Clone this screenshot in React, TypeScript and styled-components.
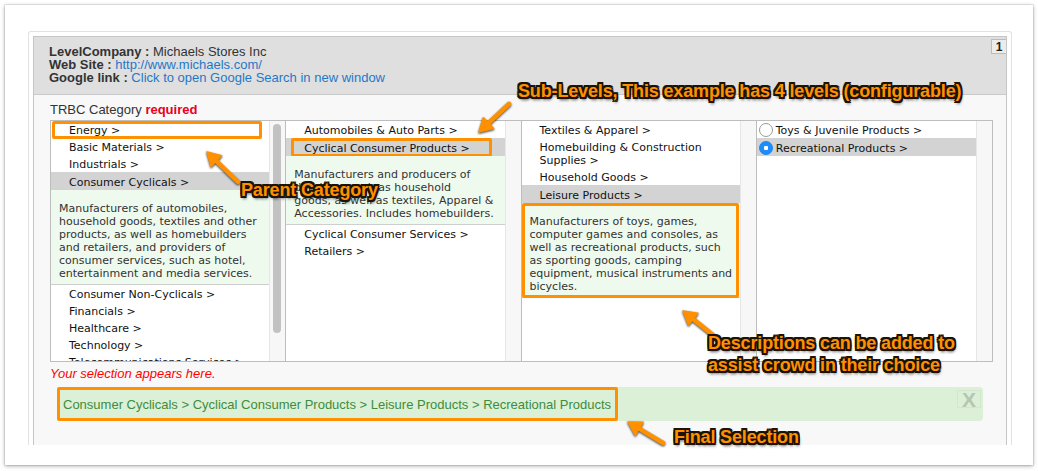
import React from 'react'
import styled, { createGlobalStyle } from 'styled-components'

/*
  TRBC category picker with screenshot annotations.
*/

const GlobalStyle = createGlobalStyle`
  html, body {
    margin: 0;
    padding: 0;
    background: #fff;
  }
  body {
    font-family: "Liberation Sans", Arial, Helvetica, sans-serif;
  }
`

const ORANGE = '#ff9000'

type Item = { label: string; selected?: boolean; mark?: [number, number, number, number] }

const Stage = styled.div`
  position: relative;
  width: 1038px;
  height: 471px;
  padding: 5px;
  box-sizing: border-box;
  overflow: hidden;
`

const Card = styled.div`
  height: 460px;
  background: #fff;
  box-shadow: 0 0 0 1px rgba(0, 0, 0, 0.07), 0 1px 4px rgba(0, 0, 0, 0.35);
  padding: 26px 21px 0 23px;
  box-sizing: border-box;
`

const Frame = styled.div`
  height: 414px;
  border: 1px solid #e2e2e2;
  border-bottom: none;
  border-radius: 3px 3px 0 0;
  padding: 4px 4px 0;
  box-sizing: border-box;
`

const Box = styled.div`
  height: 100%;
  border: 1px solid #c6c6c6;
  border-bottom: none;
  background: #f8f8f8;
  box-sizing: border-box;
`

const Header = styled.div`
  position: relative;
  background: #dfdfdf;
  border-bottom: 1px solid #c9c9c9;
  padding: 8px 15px 10px;
  font-size: 13px;
  line-height: 13px;
  color: #333;
`

const Key = styled.b`
  font-weight: bold;
  color: #333;
`

const Link = styled.a`
  color: #1f78c8;
  text-decoration: none;
`

const Badge = styled.span`
  position: absolute;
  top: 2px;
  right: 0;
  width: 15px;
  height: 15px;
  border: 1px solid #bbb;
  border-right: none;
  background: #ececec;
  font-size: 12px;
  font-weight: bold;
  line-height: 15px;
  text-align: center;
  color: #222;
  box-sizing: border-box;
`

const Body = styled.div`
  padding: 0 13px 0 16px;
`

const Label = styled.div`
  padding: 7px 0 2px;
  font-size: 13px;
  line-height: 16px;
  color: #333;

  b {
    color: #e8001c;
  }
`

const Columns = styled.div`
  display: grid;
  grid-template-columns: repeat(4, 1fr);
  height: 242px;
  border: 1px solid #bdbdbd;
  background: #fff;
  box-sizing: border-box;
`

const Column = styled.div`
  display: flex;
  min-width: 0;
  border-right: 1px solid #bdbdbd;
  overflow: hidden;

  &:last-child {
    border-right: none;
  }
`

const List = styled.div`
  flex: 1;
  min-width: 0;
  overflow: hidden;
  font-family: "DejaVu Sans", Verdana, sans-serif;
  font-size: 11px;
  line-height: 13px;
  color: #111;
`

const Track = styled.div`
  width: 15px;
  flex: none;
  background: #f7f7f7;
  border-left: 1px solid #e6e6e6;
`

const Thumb = styled.div`
  width: 8px;
  height: 209px;
  margin: 3px 0 0 3px;
  border-radius: 4px;
  background: #c2c2c2;
`

const Row = styled.div<{ $selected?: boolean; $radio?: boolean }>`
  position: relative;
  display: ${p => (p.$radio ? 'flex' : 'block')};
  align-items: center;
  gap: 3px;
  padding: ${p => (p.$selected ? '4px 4px 1px' : '3px 4px 1px')};
  padding-left: ${p => (p.$radio ? '2px' : '18px')};
  background: ${p => (p.$selected ? '#d3d3d3' : 'transparent')};
`

const Desc = styled.div`
  position: relative;
  padding: 12px 8px 4px;
  background: #eefaee;
  border-bottom: 1px solid #cfcfcf;
  color: #333;
  white-space: nowrap;
`

const Mark = styled.span<{ $t: number; $r: number; $b: number; $l: number }>`
  position: absolute;
  top: ${p => p.$t}px;
  right: ${p => p.$r}px;
  bottom: ${p => p.$b}px;
  left: ${p => p.$l}px;
  border: 3px solid ${ORANGE};
  border-radius: 2px;
  pointer-events: none;
`

const Radio = styled.span<{ $on?: boolean }>`
  width: 14px;
  height: 14px;
  margin-top: -2px;
  flex: none;
  border-radius: 50%;
  box-sizing: border-box;
  border: 1px solid ${p => (p.$on ? '#1b84f0' : '#9a9a9a')};
  background: ${p => (p.$on ? 'radial-gradient(circle, #fff 0 2px, #1e8cff 2.5px)' : '#fff')};
`

const Note = styled.div`
  padding-top: 4px;
  font-size: 13px;
  line-height: 16px;
  font-style: italic;
  color: #f00;
`

const Selection = styled.div`
  display: flex;
  justify-content: space-between;
  height: 34px;
  margin: 5px 10px 0 7px;
  border-radius: 4px;
  background: #dbf0d6;
`

const Path = styled.span`
  position: relative;
  display: flex;
  align-items: center;
  padding: 0 7px 0 6px;
  font-size: 13px;
  color: #3e8c3e;
`

const Clear = styled.span`
  align-self: flex-start;
  width: 24px;
  height: 18px;
  margin: 3px 2px 0 0;
  border: 1px solid rgba(0, 0, 0, 0.035);
  font-size: 21px;
  font-weight: bold;
  line-height: 18px;
  text-align: center;
  color: #b6c6b1;
  box-sizing: border-box;
`

const Callout = styled.div<{ $x: number; $y: number }>`
  position: absolute;
  left: ${p => p.$x}px;
  top: ${p => p.$y}px;
  font-family: "Liberation Sans", Arial, sans-serif;
  font-size: 18px;
  font-weight: bold;
  line-height: 22px;
  letter-spacing: -0.15px;
  white-space: nowrap;
  color: ${ORANGE};
  text-shadow: -1.7px -1.7px 0 #1b1208, 1.7px -1.7px 0 #1b1208, -1.7px 1.7px 0 #1b1208,
    1.7px 1.7px 0 #1b1208, 0 -1.8px 0 #1b1208, 0 1.8px 0 #1b1208, -1.8px 0 0 #1b1208,
    1.8px 0 0 #1b1208, 1px 2.5px 3px rgba(0, 0, 0, 0.7);
  pointer-events: none;
`

const Overlay = styled.svg`
  position: absolute;
  left: 0;
  top: 0;
  pointer-events: none;
  filter: drop-shadow(0 1px 1.2px rgba(0, 0, 0, 0.75));
`

const Arrow = ({ x1, y1, x2, y2 }: { x1: number; y1: number; x2: number; y2: number }) => {
  const a = Math.atan2(y2 - y1, x2 - x1)
  const len = 13
  const half = 7.5
  const bx = x2 - len * Math.cos(a)
  const by = y2 - len * Math.sin(a)
  const px = -Math.sin(a) * half
  const py = Math.cos(a) * half
  const head = `${x2},${y2} ${bx + px},${by + py} ${bx - px},${by - py}`
  return (
    <g>
      <line x1={x1} y1={y1} x2={bx} y2={by} stroke={ORANGE} strokeWidth={4.5} strokeLinecap="round" />
      <polygon points={head} fill={ORANGE} stroke={ORANGE} strokeWidth={1.5} strokeLinejoin="round" />
    </g>
  )
}

const level1: Item[] = [
  { label: 'Energy >', mark: [0, 7, -1, 1] },
  { label: 'Basic Materials >' },
  { label: 'Industrials >' },
  { label: 'Consumer Cyclicals >', selected: true },
]
const level1After: Item[] = [
  { label: 'Consumer Non-Cyclicals >' },
  { label: 'Financials >' },
  { label: 'Healthcare >' },
  { label: 'Technology >' },
  { label: 'Telecommunications Services >' },
  { label: 'Utilities >' },
]
const desc1 = [
  'Manufacturers of automobiles,',
  'household goods, textiles and other',
  'products, as well as homebuilders',
  'and retailers, and providers of',
  'consumer services, such as hotel,',
  'entertainment and media services.',
]

const level2: Item[] = [
  { label: 'Automobiles & Auto Parts >' },
  { label: 'Cyclical Consumer Products >', selected: true, mark: [0, 13, -1, 5] },
]
const level2After: Item[] = [{ label: 'Cyclical Consumer Services >' }, { label: 'Retailers >' }]
const desc2 = [
  'Manufacturers and producers of',
  'durables, such as household',
  'goods, as well as textiles, Apparel &',
  'Accessories. Includes homebuilders.',
]

const level3: Item[] = [
  { label: 'Textiles & Apparel >' },
  { label: 'Homebuilding & Construction Supplies >' },
  { label: 'Household Goods >' },
  { label: 'Leisure Products >', selected: true },
]
const desc3 = [
  'Manufacturers of toys, games,',
  'computer games and consoles, as',
  'well as recreational products, such',
  'as sporting goods, camping',
  'equipment, musical instruments and',
  'bicycles.',
]

const Rows = ({ items }: { items: Item[] }) => (
  <>
    {items.map(item => (
      <Row key={item.label} $selected={item.selected}>
        {item.label}
        {item.mark && <Mark $t={item.mark[0]} $r={item.mark[1]} $b={item.mark[2]} $l={item.mark[3]} />}
      </Row>
    ))}
  </>
)

const Description = ({ lines, marked }: { lines: string[]; marked?: boolean }) => (
  <Desc>
    {lines.map((line, i) => (
      <React.Fragment key={i}>
        {line}
        {i < lines.length - 1 && <br />}
      </React.Fragment>
    ))}
    {marked && <Mark $t={0} $r={1} $b={-1} $l={0} />}
  </Desc>
)

export default function App(): JSX.Element {
  return (
    <Stage>
      <GlobalStyle />
      <Card>
        <Frame>
          <Box>
            <Header>
              <Key>LevelCompany :</Key> Michaels Stores Inc
              <br />
              <Key>Web Site :</Key> <Link href="#">http://www.michaels.com/</Link>
              <br />
              <Key>Google link :</Key> <Link href="#">Click to open Google Search in new window</Link>
              <Badge>1</Badge>
            </Header>
            <Body>
              <Label>
                TRBC Category <b>required</b>
              </Label>
              <Columns>
                <Column>
                  <List>
                    <Rows items={level1} />
                    <Description lines={desc1} />
                    <Rows items={level1After} />
                  </List>
                  <Track>
                    <Thumb />
                  </Track>
                </Column>
                <Column>
                  <List>
                    <Rows items={level2} />
                    <Description lines={desc2} />
                    <Rows items={level2After} />
                  </List>
                  <Track />
                </Column>
                <Column>
                  <List>
                    <Rows items={level3} />
                    <Description lines={desc3} marked />
                  </List>
                  <Track />
                </Column>
                <Column>
                  <List>
                    <Row $radio>
                      <Radio />
                      Toys &amp; Juvenile Products &gt;
                    </Row>
                    <Row $radio $selected>
                      <Radio $on />
                      Recreational Products &gt;
                    </Row>
                  </List>
                  <Track />
                </Column>
              </Columns>
              <Note>Your selection appears here.</Note>
              <Selection>
                <Path>
                  Consumer Cyclicals &gt; Cyclical Consumer Products &gt; Leisure Products &gt; Recreational Products
                  <Mark $t={0} $r={0} $b={0} $l={0} />
                </Path>
                <Clear>X</Clear>
              </Selection>
            </Body>
          </Box>
        </Frame>
      </Card>

      <Overlay width={1038} height={471}>
        <Arrow x1={509} y1={104} x2={479} y2={132} />
        <Arrow x1={238} y1={182} x2={207} y2={152} />
        <Arrow x1={713} y1={335} x2={683} y2={311} />
        <Arrow x1={663} y1={443} x2={628} y2={422} />
      </Overlay>

      <Callout $x={518} $y={80}>Sub-Levels, This example has 4 levels (configurable)</Callout>
      <Callout $x={241} $y={179}>Parent Category</Callout>
      <Callout $x={708} $y={332}>
        Descriptions can be added to
        <br />
        assist crowd in their choice
      </Callout>
      <Callout $x={674} $y={426}>Final Selection</Callout>
    </Stage>
  )
}
